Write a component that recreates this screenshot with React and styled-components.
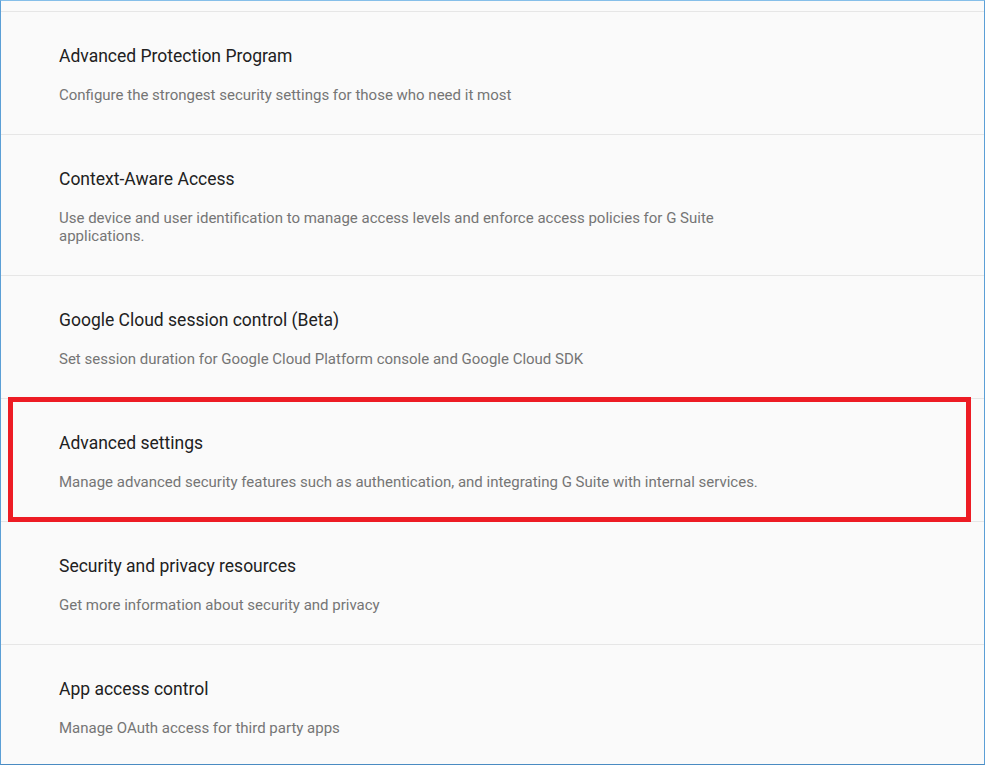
import React from "react";
import styled, { createGlobalStyle } from "styled-components";

const Global = createGlobalStyle`
  html, body { margin: 0; padding: 0; background: #fafafa; }
  body { font-family: Roboto, "Noto Sans", Arial, sans-serif; }
`;

const Frame = styled.div`
  box-sizing: border-box;
  width: 985px;
  height: 765px;
  overflow: hidden;
  background: #fafafa;
  border: 1px solid #5b9fd6;
  border-top-color: #86bfe9;
  border-bottom-color: #4a8bc2;
`;

const Stub = styled.div`
  height: 10px;
  border-bottom: 1px solid #e6e6e6;
`;

const Row = styled.div`
  position: relative;
  padding: 32px 0 30px 58px;
  border-bottom: 1px solid #e6e6e6;
`;

const Title = styled.div`
  font-size: 17.5px;
  line-height: 24px;
  color: #212121;
  font-weight: 400;
`;

const Desc = styled.div`
  margin-top: 18px;
  font-size: 15px;
  line-height: 18px;
  color: #757575;
  max-width: 720px;
`;

const Highlight = styled.div`
  position: absolute;
  top: -2px;
  left: 7px;
  right: 13px;
  height: 125px;
  box-sizing: border-box;
  border: 5px solid #ed1c24;
  pointer-events: none;
`;

const items = [
  {
    title: "Advanced Protection Program",
    desc: "Configure the strongest security settings for those who need it most",
  },
  {
    title: "Context-Aware Access",
    desc: "Use device and user identification to manage access levels and enforce access policies for G Suite applications.",
  },
  {
    title: "Google Cloud session control (Beta)",
    desc: "Set session duration for Google Cloud Platform console and Google Cloud SDK",
  },
  {
    title: "Advanced settings",
    desc: "Manage advanced security features such as authentication, and integrating G Suite with internal services.",
    highlight: true,
  },
  {
    title: "Security and privacy resources",
    desc: "Get more information about security and privacy",
  },
  {
    title: "App access control",
    desc: "Manage OAuth access for third party apps",
  },
];

export default function App() {
  return (
    <>
      <Global />
      <Frame>
        <Stub />
        {items.map((it) => (
          <Row key={it.title}>
            <Title>{it.title}</Title>
            <Desc>{it.desc}</Desc>
            {it.highlight && <Highlight />}
          </Row>
        ))}
      </Frame>
    </>
  );
}
